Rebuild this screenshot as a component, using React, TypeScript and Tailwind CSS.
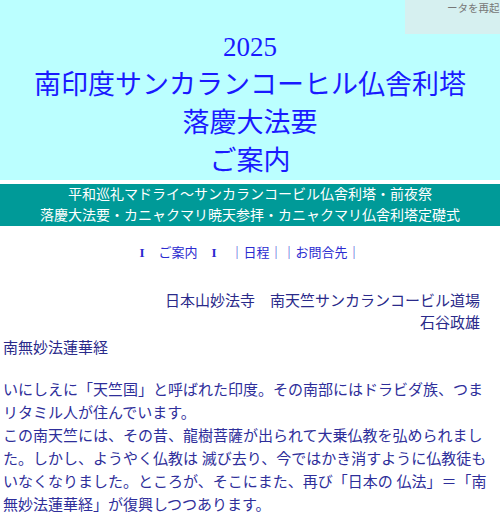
const jp = "font-['Liberation_Serif','Noto_Sans_CJK_JP',serif]";

export default function App() {
  return (
    <div className={`relative min-h-[518px] w-[500px] bg-white ${jp}`}>
      <div className="bg-[#bbffff] pt-[28px] text-center text-[27px] leading-[38px] text-[#1a1aff]">
        <div>2025</div>
        <div>南印度サンカランコーヒル仏舎利塔</div>
        <div>落慶大法要</div>
        <div>ご案内</div>
      </div>
      <div className="mt-[4px] bg-[#009a98] text-center text-[14px] leading-[21px] text-white">
        <div>平和巡礼マドライ〜サンカランコービル仏舎利塔・前夜祭</div>
        <div>落慶大法要・カニャクマリ暁天参拝・カニャクマリ仏舎利塔定礎式</div>
      </div>
      <div className="mt-[17px] flex justify-center text-[13px] leading-[20px] text-[#2b2bd0]">
        <span className="mr-[14px] font-bold">I</span>
        <span>ご案内</span>
        <span className="ml-[14px] mr-[14px] font-bold">I</span>
        <span>｜日程｜</span>
        <span>｜お問合先｜</span>
      </div>
      <div className="mt-[27px] pr-[20px] text-right text-[15px] leading-[22px] text-[#2a2a8a]">
        <div>日本山妙法寺　南天竺サンカランコービル道場</div>
        <div>石谷政雄</div>
      </div>
      <div className="mt-[3px] pl-[3px] text-[15px] leading-[22px] text-[#2a2a8a]">南無妙法蓮華経</div>
      <div className="mt-[20px] pl-[3px] pr-[12px] text-[15px] leading-[23px] text-[#2e2e9a]">
        いにしえに「天竺国」と呼ばれた印度。その南部にはドラビダ族、つまリタミル人が住んでいます。
        <br />
        この南天竺には、その昔、龍樹菩薩が出られて大乗仏教を弘められました。しかし、ようやく仏教は 滅び去り、今ではかき消すように仏教徒もいなくなりました。ところが、そこにまた、再び「日本の 仏法」＝「南無妙法蓮華経」が復興しつつあります。
      </div>
      <div className="absolute right-0 top-0 h-[34px] w-[95px] overflow-hidden bg-[#d6f0f0]">
        <div className="ml-[42px] mt-[1px] whitespace-nowrap font-['Noto_Sans_CJK_JP',sans-serif] text-[10.5px] leading-[14px] text-[#777777]">
          ータを再起
        </div>
      </div>
    </div>
  );
}
